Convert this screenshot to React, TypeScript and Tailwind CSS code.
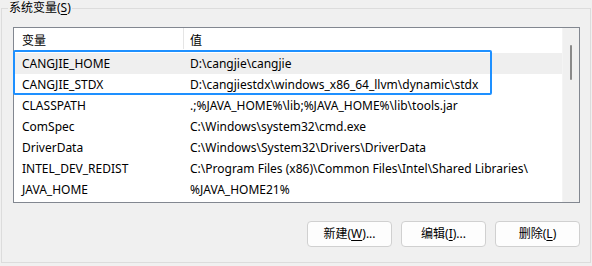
const rows: [string, string][] = [
  ["CANGJIE_HOME", "D:\\cangjie\\cangjie"],
  ["CANGJIE_STDX", "D:\\cangjiestdx\\windows_x86_64_llvm\\dynamic\\stdx"],
  ["CLASSPATH", ".;%JAVA_HOME%\\lib;%JAVA_HOME%\\lib\\tools.jar"],
  ["ComSpec", "C:\\Windows\\system32\\cmd.exe"],
  ["DriverData", "C:\\Windows\\System32\\Drivers\\DriverData"],
  ["INTEL_DEV_REDIST", "C:\\Program Files (x86)\\Common Files\\Intel\\Shared Libraries\\"],
  ["JAVA_HOME", "%JAVA_HOME21%"],
]

function Btn({ label, hotkey, tail }: { label: string; hotkey: string; tail?: string }) {
  return (
    <button className="h-[26px] w-[85px] rounded-[4px] border border-[#d0d0d0] bg-[#fdfdfd] text-[12px] text-black">
      {label}(<span className="underline underline-offset-2">{hotkey}</span>){tail}
    </button>
  )
}

export default function App() {
  return (
    <div
      className="h-[266px] w-[592px] bg-[#f0f0f0] text-[12px] text-black"
      style={{ fontFamily: '"Noto Sans", "Noto Sans CJK SC", sans-serif' }}
    >
      <fieldset className="ml-px h-[263px] w-[590px] border border-[#dcdcdc] pl-[11px] pr-[10px]">
        <legend className="ml-[-5px] px-px leading-[16px]">
          系统变量(<span className="underline underline-offset-2">S</span>)
        </legend>

        <div className="relative mt-[11px] flex h-[176px] border border-[#828790] bg-white">
          <div className="flex-1 overflow-hidden">
            {/* header */}
            <div className="flex h-[25px] items-center">
              <div className="w-[169px] pl-[8px]">变量</div>
              <div className="h-[21px] w-px self-start bg-[#e5e5e5]" />
              <div className="pl-[6px]">值</div>
            </div>
            {rows.map(([name, value], i) => (
              <div key={name} className={`flex h-[21px] items-center whitespace-nowrap ${i === 0 ? "bg-[#efefef]" : ""}`}>
                <div className="w-[170px] pl-[8px]">{name}</div>
                <div className="pl-[6px]">{value}</div>
              </div>
            ))}
          </div>

          {/* scrollbar */}
          <div className="relative w-[17px] border-l border-[#f4f4f4] bg-[#f0f0f0]">
            <div className="absolute left-[7px] top-[17px] h-[35px] w-[2px] rounded-full bg-[#8a8a8a]" />
          </div>

          {/* highlight annotation */}
          <div className="absolute left-[-1px] top-[22px] h-[45px] w-[479px] rounded-[2px] border-2 border-[#1e90ff]" />
        </div>

        <div className="mt-[18px] flex justify-end gap-[9px]">
          <Btn label="新建" hotkey="W" tail="..." />
          <Btn label="编辑" hotkey="I" tail="..." />
          <Btn label="删除" hotkey="L" />
        </div>
      </fieldset>
    </div>
  )
}
